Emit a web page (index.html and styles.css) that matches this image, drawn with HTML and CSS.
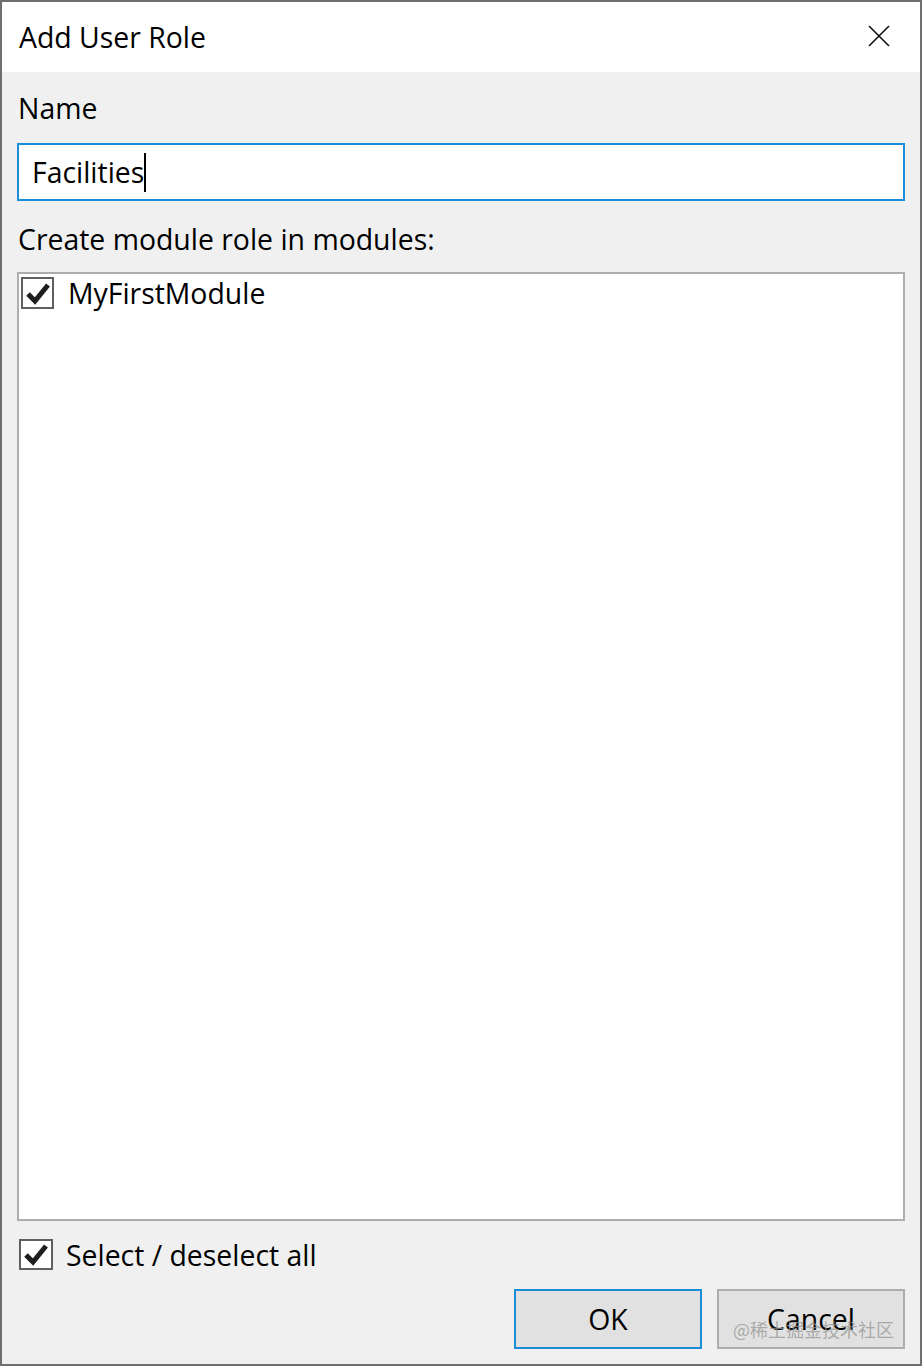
FILE: index.html
```html
<!DOCTYPE html>
<html>
<head>
<meta charset="utf-8">
<link rel="stylesheet" href="styles.css">
</head>
<body>
<div class="window">
  <div class="titlebar">
    <span class="title">Add User Role</span>
    <span class="close">
      <svg width="22" height="22" viewBox="0 0 22 22"><path d="M1 1 L21 21 M21 1 L1 21" stroke="#111" stroke-width="1.6" fill="none"/></svg>
    </span>
  </div>
  <div class="content">
    <div class="label label-name">Name</div>
    <div class="input"><span class="input-text">Facilities</span><span class="caret"></span></div>
    <div class="label label-modules">Create module role in modules:</div>
    <div class="list">
      <div class="list-item">
        <span class="check">
          <svg width="33" height="32" viewBox="0 0 33 32"><rect x="1" y="1" width="31" height="30" fill="#fff" stroke="#5f5f5f" stroke-width="2"/><path d="M7 17 L14 24 L27 8" stroke="#1e1e1e" stroke-width="5" fill="none" stroke-linejoin="miter"/></svg>
        </span>
        <span class="item-text">MyFirstModule</span>
      </div>
    </div>
    <div class="select-all">
      <span class="check">
        <svg width="34" height="31" viewBox="0 0 34 31"><rect x="1" y="1" width="32" height="29" fill="#fff" stroke="#5f5f5f" stroke-width="2"/><path d="M7 16 L14 23 L27 7" stroke="#1e1e1e" stroke-width="5" fill="none"/></svg>
      </span>
      <span class="item-text">Select / deselect all</span>
    </div>
    <div class="buttons">
      <div class="btn btn-ok">OK</div>
      <div class="btn btn-cancel">Cancel</div>
    </div>
  </div>
  <div class="watermark">@稀土掘金技术社区</div>
</div>
</body>
</html>
```
FILE: styles.css
```css
html, body {
  margin: 0;
  padding: 0;
  background: #f0f0f0;
}
.window {
  position: relative;
  width: 922px;
  height: 1366px;
  box-sizing: border-box;
  border: 2px solid #6f6f6f;
  background: #f0f0f0;
  display: flex;
  flex-direction: column;
  font-family: "Open Sans", "Noto Sans", sans-serif;
  font-size: 28.4px;
  color: #000;
}
.titlebar {
  height: 70px;
  flex: none;
  background: #fff;
  display: flex;
  align-items: center;
  justify-content: space-between;
  padding-left: 17px;
  padding-right: 30px;
}
.title {
  line-height: 40px;
}
.close {
  display: flex;
  width: 22px;
  height: 22px;
  margin-top: -2px;
}
.content {
  flex: 1;
  display: flex;
  flex-direction: column;
  padding: 0 15px 15px 15px;
  min-height: 0;
}
.label {
  line-height: 40px;
  padding-left: 1px;
}
.label-name {
  margin-top: 16px;
  margin-bottom: 15px;
}
.input {
  height: 58px;
  box-sizing: border-box;
  border: 2px solid #1a8cd8;
  background: #fff;
  display: flex;
  align-items: center;
  padding-left: 13px;
}
.input-text {
  line-height: 40px;
}
.caret {
  display: inline-block;
  width: 2px;
  height: 39px;
  background: #000;
}
.label-modules {
  margin-top: 18px;
  margin-bottom: 13px;
}
.list {
  flex: 1;
  box-sizing: border-box;
  border: 2px solid #adadad;
  background: #fff;
  padding: 3px 2px;
}
.list-item {
  display: flex;
  align-items: center;
  height: 32px;
}
.check {
  display: flex;
  flex: none;
}
.item-text {
  margin-left: 14px;
  line-height: 40px;
}
.select-all {
  display: flex;
  align-items: center;
  height: 31px;
  margin-top: 18px;
  padding-left: 2px;
}
.select-all .item-text {
  margin-left: 13px;
}
.buttons {
  display: flex;
  justify-content: flex-end;
  gap: 15px;
  margin-top: 19px;
}
.btn {
  width: 188px;
  height: 60px;
  box-sizing: border-box;
  background: #e1e1e1;
  display: flex;
  align-items: center;
  justify-content: center;
}
.btn-ok {
  border: 2px solid #1a8cd8;
}
.btn-cancel {
  border: 2px solid #adadad;
}
.watermark {
  position: absolute;
  left: 731px;
  top: 1314px;
  font-family: "Noto Sans CJK SC", sans-serif;
  font-size: 18px;
  color: rgba(150, 150, 150, 0.75);
}
```
